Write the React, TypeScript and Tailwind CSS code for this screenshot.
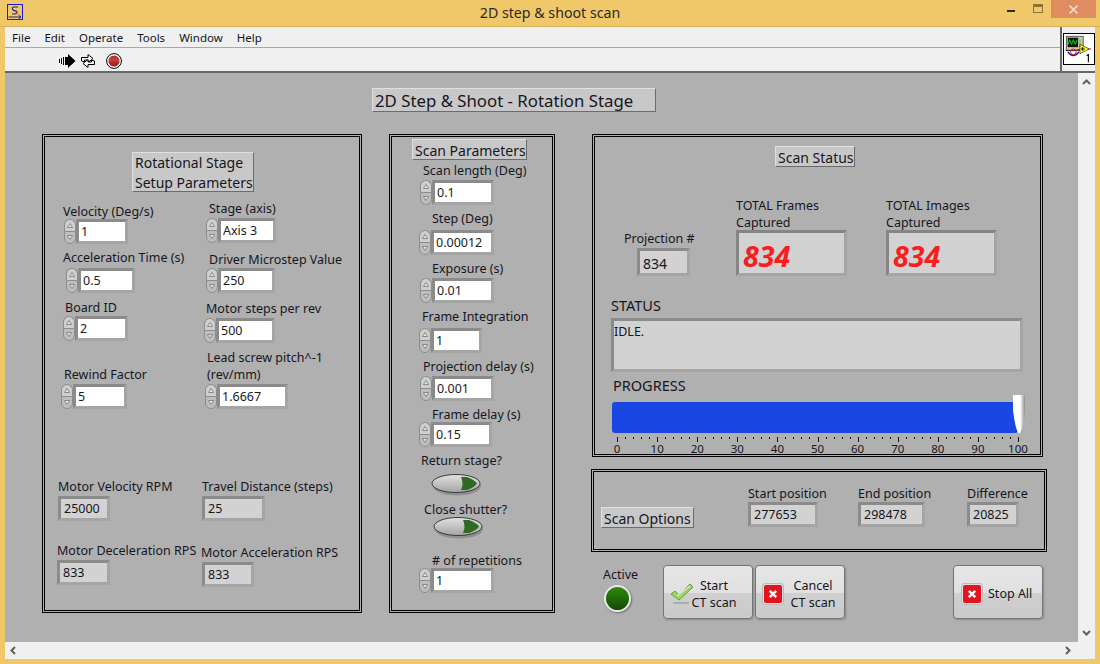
import React from "react";

const FONT = "font-['Noto_Sans','Liberation_Sans',sans-serif]";

function Spinner() {
  return (
    <div className="flex h-[25px] w-[12px] shrink-0 flex-col">
      <div className="flex h-[12px] items-center justify-center rounded-t-full border border-[#8c8c8c] border-b-0 bg-[#cfcfcf]">
        <svg width="6" height="5" viewBox="0 0 6 5"><path d="M3 0.5 L5.5 4.5 H0.5 Z" fill="#e8e8e8" stroke="#777" strokeWidth="0.8" /></svg>
      </div>
      <div className="flex h-[13px] items-center justify-center rounded-b-full border border-[#8c8c8c] bg-[#bdbdbd]">
        <svg width="6" height="5" viewBox="0 0 6 5"><path d="M3 4.5 L5.5 0.5 H0.5 Z" fill="#e8e8e8" stroke="#777" strokeWidth="0.8" /></svg>
      </div>
    </div>
  );
}

// numeric control with the up/down arrows
function Num({ pos, width, value }: { pos: string; width: string; value: string }) {
  return (
    <div className={`absolute flex items-center ${pos}`}>
      <Spinner />
      <div className={`flex h-[25px] items-center border-[3px] border-t-[#8b8b8b] border-l-[#8b8b8b] border-r-[#a5a5a5] border-b-[#a5a5a5] bg-white pl-[2px] pt-[2px] text-[#1a1a1a] ${width}`}>
        {value}
      </div>
    </div>
  );
}

function Ind({ pos, value }: { pos: string; value: string }) {
  return (
    <div className={`absolute flex items-center border-[3px] border-t-[#8b8b8b] border-l-[#8b8b8b] border-r-[#a5a5a5] border-b-[#a5a5a5] bg-[#d2d2d2] pl-[3px] pt-[2px] ${pos}`}>
      {value}
    </div>
  );
}

function Big({ pos, value }: { pos: string; value: string }) {
  return (
    <div className={`absolute flex h-[46px] w-[111px] items-center border-[3px] border-t-[#858585] border-l-[#858585] border-r-[#a5a5a5] border-b-[#a5a5a5] bg-[#d2d2d2] pl-[4px] pt-[7px] text-[28.5px] font-bold italic text-[#fb1c1c] ${pos}`}>
      {value}
    </div>
  );
}

function Lbl({ pos, children }: { pos: string; children: React.ReactNode }) {
  return <div className={`absolute whitespace-nowrap pt-[2px] leading-[17px] ${pos}`}>{children}</div>;
}

function Deco({ pos, children }: { pos: string; children: React.ReactNode }) {
  return (
    <div className={`absolute flex items-center whitespace-nowrap border border-t-[#e0e0e0] border-l-[#e0e0e0] border-r-[#6c6c6c] border-b-[#6c6c6c] bg-[#c8c8c8] pt-[2px] leading-[20px] ${pos}`}>
      {children}
    </div>
  );
}

function Panel({ pos }: { pos: string }) {
  return <div className={`absolute border-[3px] border-double border-black ${pos}`} />;
}

function Toggle({ pos }: { pos: string }) {
  return (
    <svg className={`absolute ${pos}`} width="54" height="24" viewBox="0 0 54 24">
      <defs>
        <linearGradient id="tg" x1="0" y1="0" x2="0" y2="1">
          <stop offset="0" stopColor="#e2e2e2" />
          <stop offset="1" stopColor="#a4a4a4" />
        </linearGradient>
      </defs>
      <ellipse cx="26" cy="13" rx="24" ry="9.5" fill="#8f8f8f" />
      <ellipse cx="25" cy="10.5" rx="24" ry="9" fill="url(#tg)" stroke="#3a3a3a" strokeWidth="1" />
      <path d="M30 4 H36 Q44 7 46 10.5 Q44 14 36 17 H30 Q33 10.5 30 4 Z" fill="#2f6a20" />
    </svg>
  );
}

function XTile() {
  return (
    <div className="flex h-[22px] w-[22px] shrink-0 items-center justify-center rounded-[3px] border border-[#bbb] bg-[#ddd]">
      <div className="flex h-[18px] w-[18px] items-center justify-center rounded-[2px] bg-[#e3141f]">
        <svg width="10" height="10" viewBox="0 0 10 10"><path d="M1.8 1.8 L8.2 8.2 M8.2 1.8 L1.8 8.2" stroke="#fff" strokeWidth="2.4" /></svg>
      </div>
    </div>
  );
}

function Btn({ pos, children }: { pos: string; children: React.ReactNode }) {
  return (
    <div className={`absolute flex h-[54px] w-[90px] items-center rounded-[4px] border border-[#757575] bg-[linear-gradient(#e6e6e6_0%,#e0e0e0_52%,#d0d0d0_52%,#cacaca_100%)] pt-[4px] shadow-[1px_1px_2px_#8a8a8a] ${pos}`}>
      {children}
    </div>
  );
}

function Scale() {
  const ticks = Array.from({ length: 51 }, (_, i) => i);
  return (
    <svg className="absolute left-[612px] top-[363px]" width="402" height="8" viewBox="0 0 402 8">
      {ticks.map((i) => {
        const x = Math.round(i * 8.02) + 0.5;
        return <line key={i} x1={x} x2={x} y1={1} y2={i % 5 === 0 ? 6 : 3} stroke="#111" />;
      })}
    </svg>
  );
}

function ViIcon() {
  return (
    <svg width="32" height="32" viewBox="0 0 32 32" className="border border-black bg-white">
      <rect x="2.5" y="2.5" width="18" height="15" fill="#c8c8a8" stroke="#555" />
      <rect x="4" y="4" width="11" height="10" fill="#061a06" />
      <path d="M4.5 11 L6 6 L8 11 L10 6 L12 11 L14 6" fill="none" stroke="#1fd61f" />
      <path d="M17 6 V14" stroke="#777" strokeDasharray="2 1" />
      <path d="M2 17.5 H20" stroke="#222" />
      <path d="M4 19 Q10 27 16 19" fill="none" stroke="#1414b4" strokeWidth="1.5" />
      <circle cx="10" cy="19" r="3" fill="none" stroke="#e01010" />
      <path d="M10 18 L18 16 H29" fill="none" stroke="#e01010" />
      <path d="M17 11 L27 16 L17 21 Z" fill="#ffff20" stroke="#222" strokeWidth="0.7" />
      <path d="M20 14 V18 M18 16 H22" stroke="#000" />
      <path d="M24 23 L26 22 V30" fill="none" stroke="#000" strokeWidth="1.2" />
    </svg>
  );
}

export default function App() {
  return (
    <div className={`flex h-[664px] w-[1100px] flex-col overflow-hidden bg-[#f0c869] text-[12.5px] text-[#161622] ${FONT}`}>
      {/* title bar */}
      <div className="relative flex h-[27px] shrink-0 items-center justify-center border-b border-[#d7b25c] text-[14.2px] leading-none text-[#2a2a2a]">
        <svg className="absolute left-[7px] top-[4px]" width="16" height="16" viewBox="0 0 16 16">
          <rect x="0.5" y="0.5" width="15" height="15" fill="none" stroke="#1c1cd8" />
          <path d="M11 3 H7 Q5 3 5.5 5 Q6 6.5 8 6.8 Q10.5 7.2 10 9 Q9.5 10 5 10" fill="none" stroke="#1c1c9a" strokeWidth="1.2" />
          <path d="M1.5 13 H13.5 M11.5 11 L14 13 L11.5 15" fill="none" stroke="#1c1c9a" />
        </svg>
        2D step &amp; shoot scan
        <div className="absolute left-[1007px] top-[10px] h-[2px] w-[8px] bg-[#2d2d2d]" />
        <div className="absolute left-[1033px] top-[4px] h-[9px] w-[10px] border border-t-[3px] border-[#8d7235]" />
        <div className="absolute left-[1051px] top-0 flex h-[18px] w-[45px] items-center justify-center bg-[#dd8d60]">
          <svg width="9" height="9" viewBox="0 0 9 9"><path d="M0.5 0.5 L8.5 8.5 M8.5 0.5 L0.5 8.5" stroke="#f3d9c8" strokeWidth="1.6" /></svg>
        </div>
      </div>

      <div className="ml-[5px] mr-[5px] flex h-[632px] flex-col bg-[#f0f0f0]">
        {/* menu + toolbar + vi icon */}
        <div className="flex h-[46px] shrink-0 border-b-2 border-[#686868]">
          <div className="flex flex-1 flex-col">
            <div className="flex h-[21px] items-center gap-[14px] border-b border-[#a8a8a8] pl-[7px] pt-px text-[11.5px] text-[#14141e]">
              <span>File</span>
              <span>Edit</span>
              <span>Operate</span>
              <span>Tools</span>
              <span>Window</span>
              <span>Help</span>
            </div>
            <div className="flex flex-1 items-center pl-[54px] pt-[3px]">
              <svg width="17" height="14" viewBox="0 0 17 14">
                <path d="M0 5 H1 V9 H0 Z M2 4 H3 V10 H2 Z M4 3 H5 V11 H4 Z M6 3 H9 V0 L16.5 7 L9 14 V11 H6 Z" fill="#000" />
              </svg>
              <svg className="ml-[4px]" width="16" height="16" viewBox="0 0 16 16">
                <path d="M1.5 8 V4.5 H8 V1.5 L13 5.5 L8 9.5 V7 H4.5 V9 Z" fill="#fff" stroke="#000" strokeWidth="1" />
                <path d="M14.5 8 V11.5 H8 V14.5 L3 10.5 L8 6.5 V9 H11.5 V7 Z" fill="#fff" stroke="#000" strokeWidth="1" />
              </svg>
              <svg className="ml-[10px]" width="16" height="16" viewBox="0 0 16 16">
                <defs>
                  <linearGradient id="st" x1="0" y1="0" x2="0" y2="1">
                    <stop offset="0" stopColor="#a83030" />
                    <stop offset="0.5" stopColor="#c44444" />
                    <stop offset="0.5" stopColor="#c02c2c" />
                    <stop offset="1" stopColor="#9c1c1c" />
                  </linearGradient>
                </defs>
                <circle cx="8" cy="8" r="7.4" fill="#fff" stroke="#000" />
                <circle cx="8" cy="8" r="5.6" fill="url(#st)" />
              </svg>
            </div>
          </div>
          <div className="flex w-[35px] items-center justify-center border-l-2 border-[#686868]">
            <ViIcon />
          </div>
        </div>

        <div className="flex min-h-0 flex-1">
          {/* front panel canvas */}
          <div className="relative flex-1 overflow-hidden bg-[#b0b0b0]">
            <Deco pos="left-[367px] top-[15px] h-[24px] w-[284px] pl-[2px] text-[16.8px]">2D Step &amp; Shoot - Rotation Stage</Deco>

            <Panel pos="left-[37px] top-[61px] h-[479px] w-[320px]" />
            <Panel pos="left-[384px] top-[61px] h-[479px] w-[166px]" />
            <Panel pos="left-[587px] top-[61px] h-[323px] w-[451px]" />
            <Panel pos="left-[586px] top-[396px] h-[83px] w-[456px]" />

            <Deco pos="left-[127px] top-[79px] h-[40px] w-[122px] pl-[2px] text-[14px]"><span>Rotational Stage<br />Setup Parameters</span></Deco>
            <Deco pos="left-[407px] top-[66px] h-[21px] w-[115px] pl-[2px] text-[14px]">Scan Parameters</Deco>
            <Deco pos="left-[770px] top-[73px] h-[21px] w-[80px] pl-[2px] text-[14px]">Scan Status</Deco>
            <Deco pos="left-[596px] top-[434px] h-[21px] w-[93px] pl-[2px] text-[14px]">Scan Options</Deco>

            <Lbl pos="left-[58px] top-[128px]">Velocity (Deg/s)</Lbl>
            <Num pos="left-[59px] top-[146px]" width="w-[52px]" value="1" />
            <Lbl pos="left-[204px] top-[125px]">Stage (axis)</Lbl>
            <Num pos="left-[201px] top-[145px]" width="w-[58px]" value="Axis 3" />
            <Lbl pos="left-[58px] top-[174px]">Acceleration Time (s)</Lbl>
            <Num pos="left-[61px] top-[195px]" width="w-[57px]" value="0.5" />
            <Lbl pos="left-[204px] top-[176px]">Driver Microstep Value</Lbl>
            <Num pos="left-[201px] top-[195px]" width="w-[57px]" value="250" />
            <Lbl pos="left-[60px] top-[224px]">Board ID</Lbl>
            <Num pos="left-[58px] top-[243px]" width="w-[53px]" value="2" />
            <Lbl pos="left-[201px] top-[225px]">Motor steps per rev</Lbl>
            <Num pos="left-[199px] top-[245px]" width="w-[59px]" value="500" />
            <Lbl pos="left-[59px] top-[291px]">Rewind Factor</Lbl>
            <Num pos="left-[56px] top-[311px]" width="w-[54px]" value="5" />
            <Lbl pos="left-[202px] top-[274px]">Lead screw pitch^-1<br />(rev/mm)</Lbl>
            <Num pos="left-[200px] top-[311px]" width="w-[71px]" value="1.6667" />

            <Lbl pos="left-[53px] top-[403px]">Motor Velocity RPM</Lbl>
            <Ind pos="left-[53px] top-[423px] h-[25px] w-[52px]" value="25000" />
            <Lbl pos="left-[197px] top-[403px]">Travel Distance (steps)</Lbl>
            <Ind pos="left-[197px] top-[423px] h-[25px] w-[63px]" value="25" />
            <Lbl pos="left-[52px] top-[467px]">Motor Deceleration RPS</Lbl>
            <Ind pos="left-[52px] top-[487px] h-[25px] w-[53px]" value="833" />
            <Lbl pos="left-[196px] top-[469px]">Motor Acceleration RPS</Lbl>
            <Ind pos="left-[197px] top-[489px] h-[25px] w-[52px]" value="833" />

            <Lbl pos="left-[418px] top-[87px]">Scan length (Deg)</Lbl>
            <Num pos="left-[415px] top-[107px]" width="w-[62px]" value="0.1" />
            <Lbl pos="left-[427px] top-[135px]">Step (Deg)</Lbl>
            <Num pos="left-[414px] top-[157px]" width="w-[63px]" value="0.00012" />
            <Lbl pos="left-[427px] top-[185px]">Exposure (s)</Lbl>
            <Num pos="left-[415px] top-[205px]" width="w-[62px]" value="0.01" />
            <Lbl pos="left-[417px] top-[233px]">Frame Integration</Lbl>
            <Num pos="left-[414px] top-[255px]" width="w-[51px]" value="1" />
            <Lbl pos="left-[418px] top-[283px]">Projection delay (s)</Lbl>
            <Num pos="left-[415px] top-[303px]" width="w-[62px]" value="0.001" />
            <Lbl pos="left-[427px] top-[331px]">Frame delay (s)</Lbl>
            <Num pos="left-[414px] top-[349px]" width="w-[61px]" value="0.15" />
            <Lbl pos="left-[416px] top-[377px]">Return stage?</Lbl>
            <Toggle pos="left-[426px] top-[400px]" />
            <Lbl pos="left-[419px] top-[426px]">Close shutter?</Lbl>
            <Toggle pos="left-[428px] top-[443px]" />
            <Lbl pos="left-[427px] top-[477px]"># of repetitions</Lbl>
            <Num pos="left-[414px] top-[495px]" width="w-[63px]" value="1" />

            <Lbl pos="left-[619px] top-[155px]">Projection #</Lbl>
            <Ind pos="left-[632px] top-[175px] h-[28px] w-[53px] text-[14px]" value="834" />
            <Lbl pos="left-[731px] top-[122px]">TOTAL Frames<br />Captured</Lbl>
            <Big pos="left-[731px] top-[157px]" value="834" />
            <Lbl pos="left-[881px] top-[122px]">TOTAL Images<br />Captured</Lbl>
            <Big pos="left-[881px] top-[157px]" value="834" />

            <Lbl pos="left-[606px] top-[222px] text-[14.5px]">STATUS</Lbl>
            <div className="absolute left-[606px] top-[245px] h-[54px] w-[412px] border-[3px] border-t-[#8b8b8b] border-l-[#8b8b8b] border-r-[#a5a5a5] border-b-[#a5a5a5] bg-[#d2d2d2] pt-[2px] leading-[18px]">IDLE.</div>
            <Lbl pos="left-[608px] top-[302px] text-[14.5px]">PROGRESS</Lbl>
            <div className="absolute left-[607px] top-[329px] h-[31px] w-[406px] rounded-[3px] bg-[#1a47e3]" />
            <svg className="absolute left-[1007px] top-[321px]" width="14" height="40" viewBox="0 0 14 40">
              <defs>
                <linearGradient id="th" x1="0" y1="0" x2="1" y2="0">
                  <stop offset="0" stopColor="#fff" />
                  <stop offset="0.6" stopColor="#fff" />
                  <stop offset="1" stopColor="#8c8c96" />
                </linearGradient>
              </defs>
              <path d="M1 1 H13 V16 Q12 33 8 39 H6 Q3 33 1 16 Z" fill="url(#th)" />
            </svg>
            <Scale />
            <div className="absolute left-[592px] top-[367px] flex w-[441px] text-[11.5px] leading-[18px]">
              {["0", "10", "20", "30", "40", "50", "60", "70", "80", "90", "100"].map((t) => (
                <span key={t} className="w-[40.1px] text-center">{t}</span>
              ))}
            </div>

            <Lbl pos="left-[743px] top-[410px]">Start position</Lbl>
            <Ind pos="left-[743px] top-[429px] h-[25px] w-[70px]" value="277653" />
            <Lbl pos="left-[853px] top-[410px]">End position</Lbl>
            <Ind pos="left-[853px] top-[429px] h-[25px] w-[67px]" value="298478" />
            <Lbl pos="left-[962px] top-[410px]">Difference</Lbl>
            <Ind pos="left-[962px] top-[429px] h-[25px] w-[52px]" value="20825" />

            <Lbl pos="left-[598px] top-[491px]">Active</Lbl>
            <div className="absolute left-[599px] top-[512px] h-[27px] w-[27px] rounded-full border-2 border-[#e8e8e8] bg-[linear-gradient(#2d8a0a,#154a04)] shadow-[1px_1px_2px_#6a6a6a]" />

            <Btn pos="left-[658px] top-[492px]">
              <svg className="absolute left-[6px] top-[17px]" width="24" height="22" viewBox="0 0 24 22">
                <path d="M1 11 L5 8 L9 12 L20 1 L23 4 L9 17 Z" fill="#9ed36a" stroke="#5da03a" strokeWidth="1" />
                <path d="M7 13 L20 3" stroke="#d8f0b8" strokeWidth="1.4" />
                <path d="M3 20 H19" stroke="#8a8a8a" strokeWidth="1" />
              </svg>
              <div className="ml-[27px] w-[46px] whitespace-nowrap text-center leading-[17px]">Start<br />CT scan</div>
            </Btn>
            <Btn pos="left-[750px] top-[492px]">
              <div className="ml-[6px]"><XTile /></div>
              <div className="ml-[4px] w-[50px] whitespace-nowrap text-center leading-[17px]">Cancel<br />CT scan</div>
            </Btn>
            <Btn pos="left-[948px] top-[492px]">
              <div className="ml-[7px]"><XTile /></div>
              <div className="ml-[5px] whitespace-nowrap">Stop All</div>
            </Btn>
          </div>

          {/* vertical scrollbar */}
          <div className="flex w-[17px] shrink-0 flex-col items-center justify-between py-[6px]">
            <svg width="9" height="6" viewBox="0 0 9 6"><path d="M1 5 L4.5 1.5 L8 5" fill="none" stroke="#606060" strokeWidth="2" /></svg>
            <svg width="9" height="6" viewBox="0 0 9 6"><path d="M1 1 L4.5 4.5 L8 1" fill="none" stroke="#606060" strokeWidth="2" /></svg>
          </div>
        </div>

        {/* horizontal scrollbar */}
        <div className="flex h-[17px] shrink-0 items-center justify-between pl-[5px] pr-[24px]">
          <svg width="6" height="9" viewBox="0 0 6 9"><path d="M5 1 L1.5 4.5 L5 8" fill="none" stroke="#606060" strokeWidth="2" /></svg>
          <svg width="6" height="9" viewBox="0 0 6 9"><path d="M1 1 L4.5 4.5 L1 8" fill="none" stroke="#606060" strokeWidth="2" /></svg>
        </div>
      </div>
    </div>
  );
}
